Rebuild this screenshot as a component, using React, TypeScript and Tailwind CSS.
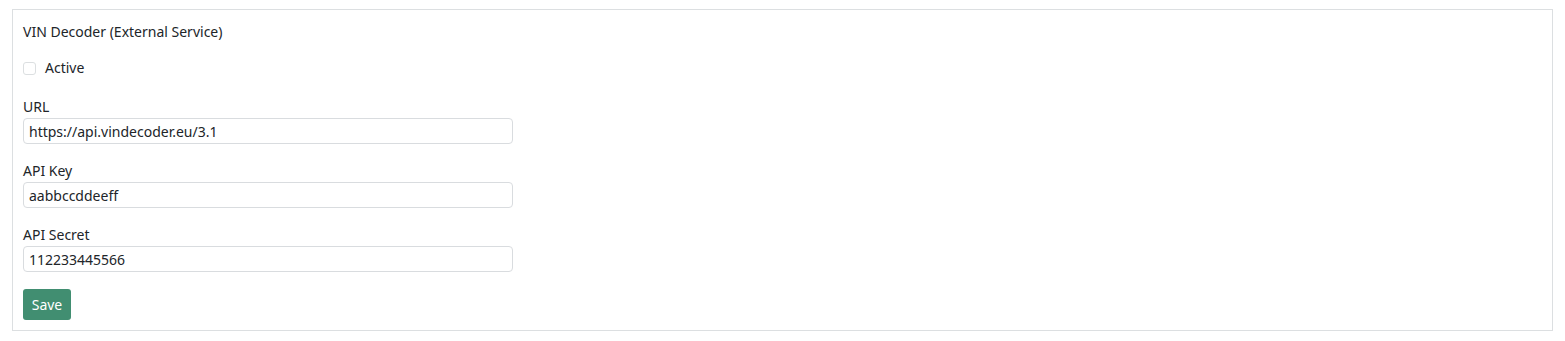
import React from "react";

export default function App() {
  const fields = [
    { label: "URL", value: "https://api.vindecoder.eu/3.1" },
    { label: "API Key", value: "aabbccddeeff" },
    { label: "API Secret", value: "112233445566" },
  ];
  return (
    <div
      className="bg-white px-[12px] pt-[9px] pb-[10px] text-[14px] text-[#212529]"
      style={{ fontFamily: '"Noto Sans", "Open Sans", sans-serif' }}
    >
      <div className="border border-[#dcdfe1] px-[10px] pt-[12px] pb-[10px]">
        <div className="leading-[20px]">VIN Decoder (External Service)</div>
        <label className="mt-[16px] flex items-center leading-[20px]">
          <span className="h-[13px] w-[13px] rounded-[3px] border border-[#dcdfe1] bg-white" />
          <span className="ml-[9px]">Active</span>
        </label>
        {fields.map((f, i) => (
          <div key={f.label} className={i === 0 ? "mt-[19px]" : "mt-[17px]"}>
            <div className="leading-[20px]">{f.label}</div>
            <input
              readOnly
              value={f.value}
              className="mt-[1px] block h-[26px] w-[490px] rounded-[4px] border border-[#d9dcdf] bg-white px-[5px] text-[14px] text-[#212529] outline-none"
            />
          </div>
        ))}
        <button className="mt-[17px] h-[31px] w-[48px] rounded-[3px] bg-[#418e71] text-[14px] text-white">
          Save
        </button>
      </div>
    </div>
  );
}
